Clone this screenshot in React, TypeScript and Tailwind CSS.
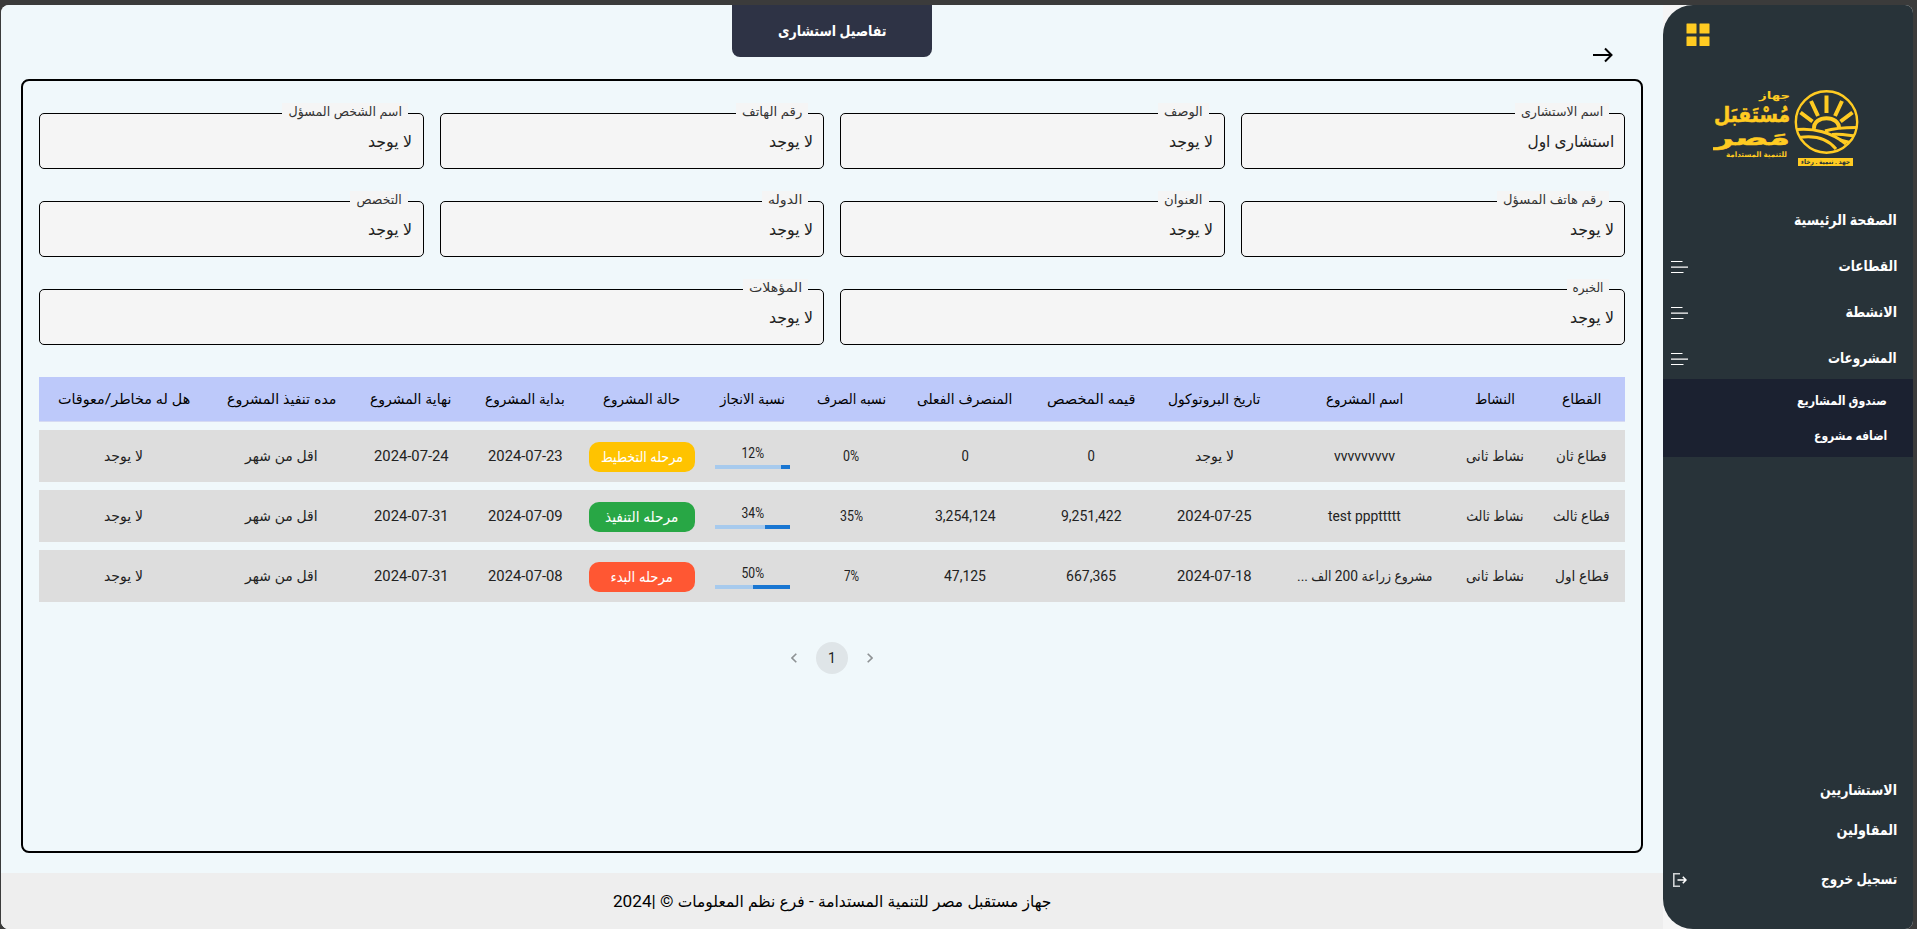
import { useLayoutEffect, useRef, useState, type ReactNode } from "react";

const ARABIC = "font-[Roboto,'DejaVu_Sans_Condensed','DejaVu_Sans',sans-serif]";

/** Text condensed or widened to a fixed measure, like a narrow Arabic face. */
function Fit({ w, children }: { w: number; children: ReactNode }) {
  const ref = useRef<HTMLSpanElement>(null);
  const [scale, setScale] = useState(1);
  useLayoutEffect(() => {
    if (ref.current && ref.current.offsetWidth > 0) setScale(w / ref.current.offsetWidth);
  }, [w]);
  return (
    <span className="inline-flex justify-start whitespace-nowrap" style={{ width: w }}>
      <span ref={ref} className="inline-block shrink-0 origin-right" style={{ transform: `scaleX(${scale})` }}>
        {children}
      </span>
    </span>
  );
}

function Field({ label, lw, value = "لا يوجد", vw = 44, wide }: { label: string; lw: number; value?: string; vw?: number; wide?: boolean }) {
  return (
    <div className={`relative flex h-14 items-center rounded-[5px] border border-black bg-[#f5f5f5] px-[10px] pt-[2px] text-base text-[#222] ${wide ? "col-span-2" : ""}`}>
      <span className="absolute -top-[11px] right-[15px] flex h-5 items-center bg-[#f5f5f5] px-[6px] pb-[2px] text-[12.5px] text-[#333]">
        <Fit w={lw}>{label}</Fit>
      </span>
      <Fit w={vw}>{value}</Fit>
    </div>
  );
}

const COLS = "grid grid-cols-[87px_86px_175px_125px_122px_130px_97px_101px_120px_114.5px_113.5px_145px_170px] items-center justify-items-center";

const HEAD: [string, number][] = [
  ["القطاع", 39], ["النشاط", 40], ["اسم المشروع", 77], ["تاريخ البروتوكول", 92], ["قيمه المخصص", 88],
  ["المنصرف الفعلى", 95], ["نسبه الصرف", 69], ["نسبة الانجاز", 65], ["حالة المشروع", 77], ["بداية المشروع", 80],
  ["نهاية المشروع", 81], ["مده تنفيذ المشروع", 109], ["هل له مخاطر/معوقات", 132],
];

type Row = { before: [string, number][]; pct: number; badge: [string, number, string]; after: [string, number][] };

const ROWS: Row[] = [
  {
    before: [["قطاع ثان", 51], ["نشاط ثانى", 58], ["vvvvvvvvv", 61], ["لا يوجد", 39], ["0", 7.5], ["0", 7.5], ["0%", 16]],
    pct: 12,
    badge: ["مرحله التخطيط", 82, "bg-[#ffc300]"],
    after: [["2024-07-23", 75], ["2024-07-24", 75], ["اقل من شهر", 73], ["لا يوجد", 39]],
  },
  {
    before: [["قطاع ثالث", 57], ["نشاط ثالث", 57], ["test pppttttt", 73], ["2024-07-25", 75], ["9,251,422", 61], ["3,254,124", 61], ["35%", 23]],
    pct: 34,
    badge: ["مرحله التنفيذ", 73, "bg-[#28a745]"],
    after: [["2024-07-09", 75], ["2024-07-31", 75], ["اقل من شهر", 73], ["لا يوجد", 39]],
  },
  {
    before: [["قطاع اول", 54], ["نشاط ثانى", 58], ["مشروع زراعة 200 الف ...", 135], ["2024-07-18", 75], ["667,365", 50], ["47,125", 42], ["7%", 15]],
    pct: 50,
    badge: ["مرحله البدء", 62.5, "bg-[#ff5733]"],
    after: [["2024-07-08", 75], ["2024-07-31", 75], ["اقل من شهر", 73], ["لا يوجد", 39]],
  },
];

function Logo() {
  return (
    <svg viewBox="0 0 146 77" className="h-[77px] w-[146px]" fill="none" stroke="#ffcb22">
      <defs>
        <clipPath id="disc"><circle cx="113.500" cy="32" r="31" /></clipPath>
      </defs>
      <circle cx="113.500" cy="32" r="30.700" strokeWidth="2.400" />
      <g clipPath="url(#disc)">
        <path d="M113.500 23V5.500M105 26 98 11M122 26 129 11M99.500 31.500 87.500 22.500M127.500 31.500 139.500 22.500" strokeWidth="4" />
        <path d="M101 39C100 24.500 127 24.500 126 39" strokeWidth="4" />
        <path d="M84 39.500C100 38 119 42 133 54M112 41C120 38.500 130 37.500 143 37.500" strokeWidth="3" />
        <path d="M86 47.500C102 45 115 49 123 59M119 44.500C126 43.500 134 45 142 46M127 50 137 52.500" strokeWidth="3" />
      </g>
      <rect x="85" y="68" width="55" height="8" fill="#ffcb22" stroke="none" />
      <g fill="#ffcb22" stroke="none" direction="rtl" className={`${ARABIC} font-bold`}>
        <text x="77" y="9" fontSize="10" textLength="31" lengthAdjust="spacingAndGlyphs">جهاز</text>
        <text x="77" y="31.500" fontSize="21" stroke="#ffcb22" strokeWidth="0.500" textLength="76" lengthAdjust="spacingAndGlyphs">مُسْتَقبَل</text>
        <text x="77" y="55" fontSize="21" stroke="#ffcb22" strokeWidth="0.500" textLength="76" lengthAdjust="spacingAndGlyphs">مَصر</text>
        <text x="74" y="67" fontSize="7.500" textLength="61" lengthAdjust="spacingAndGlyphs">للتنمية المستدامة</text>
        <text x="137" y="74" fontSize="6.500" fill="#283339" textLength="49" lengthAdjust="spacingAndGlyphs">جهد . تنمية . رخاء</text>
      </g>
    </svg>
  );
}

function MenuLines() {
  return (
    <svg viewBox="0 0 17 14" className="h-[14px] w-[17px]" stroke="#fff" strokeWidth="1.200">
      <path d="M0 1.500H11.500M0 7.200H17M0 12.500H12.500" />
    </svg>
  );
}

function NavItem({ text, w, lines }: { text: string; w: number; lines?: boolean }) {
  return (
    <div className="flex h-[46px] items-center justify-between pr-4 pl-2">
      <Fit w={w}>{text}</Fit>
      {lines && <MenuLines />}
    </div>
  );
}

export default function App() {
  return (
    <div dir="rtl" className={`h-[929px] w-[1917px] overflow-hidden bg-[#3b3b3b] pt-[5px] pr-1 pl-px ${ARABIC}`}>
      <div className="flex h-[924px] w-[1912px] overflow-hidden rounded-lg bg-[#f5f5f5]">
        <aside className="flex w-[250px] shrink-0 flex-col rounded-l-[30px] bg-[#283339] text-[14.5px] font-bold text-white">
          <div className="flex h-[85px] justify-end pt-[18px] pl-[23px]">
            <svg viewBox="0 0 24 24" className="size-6" fill="#ffcb22">
              <rect x="0.500" y="0.500" width="10" height="10" rx="0.500" />
              <rect x="13.500" y="0.500" width="10" height="10" rx="0.500" />
              <rect x="0.500" y="13.500" width="10" height="9.500" rx="0.500" />
              <rect x="13.500" y="13.500" width="10" height="9.500" rx="0.500" />
            </svg>
          </div>
          <div className="flex h-[108px] justify-end pl-[50px]"><Logo /></div>
          <NavItem text="الصفحة الرئيسية" w={103} />
          <NavItem text="القطاعات" w={58.5} lines />
          <NavItem text="الانشطة" w={51.5} lines />
          <NavItem text="المشروعات" w={69} lines />
          <div className="-mt-[3px] flex h-[78px] flex-col bg-[#1b2130] pt-[5px] pr-[26px] text-[12.5px]">
            <div className="flex h-[35px] items-center"><Fit w={90}>صندوق المشاريع</Fit></div>
            <div className="flex h-[35px] items-center"><Fit w={73}>اضافه مشروع</Fit></div>
          </div>
          <div className="mt-auto flex h-10 items-center pr-4"><Fit w={77}>الاستشاريين</Fit></div>
          <div className="flex h-10 items-center pr-4"><Fit w={60.5}>المقاولين</Fit></div>
          <div className="mb-[29px] mt-[9px] flex h-10 items-center justify-between pr-4 pl-[10px]">
            <Fit w={76}>تسجيل خروج</Fit>
            <svg viewBox="0 0 14 14" className="size-[14px]" fill="none" stroke="#fff" strokeWidth="1.600">
              <path d="M7 .8H.8V13.200H7" stroke="#cfd2d4" />
              <path d="M4.500 7H13M9.800 3.700 13 7 9.800 10.300" />
            </svg>
          </div>
        </aside>

        <div className="flex grow flex-col bg-[#f0f8fb]">
          <header className="grid h-[74px] grid-cols-3 justify-items-center">
            <div className="w-full pt-[42px] pr-[50px]">
              <svg viewBox="0 0 20 16" className="h-4 w-5" fill="none" stroke="#000" strokeWidth="2">
                <path d="M0 8H18.500M12 1.500 18.500 8 12 14.500" />
              </svg>
            </div>
            <div className="flex h-[52px] w-[200px] items-center justify-center rounded-b-lg bg-[#2e3345] text-[15px] font-bold text-white">
              <Fit w={109}>تفاصيل استشارى</Fit>
            </div>
          </header>

          <main className="mx-5 flex h-[774px] flex-col rounded-lg border-2 border-black px-4 pt-8">
            <div className="grid grid-cols-4 gap-x-4 gap-y-8">
              <Field label="اسم الاستشارى" lw={82} value="استشارى اول" vw={86.5} />
              <Field label="الوصف" lw={39} />
              <Field label="رقم الهاتف" lw={60} />
              <Field label="اسم الشخص المسؤل" lw={113.5} />
              <Field label="رقم هاتف المسؤل" lw={100} />
              <Field label="العنوان" lw={39} />
              <Field label="الدوله" lw={34} />
              <Field label="التخصص" lw={45.5} />
              <Field label="الخبره" lw={30.5} wide />
              <Field label="المؤهلات" lw={53} wide />
            </div>

            <div className="mt-8 flex flex-col gap-2 text-sm text-[#222]">
              <div className={`${COLS} h-[45px] border-b border-[#d6daf2] bg-[#bdc9fa] text-black`}>
                {HEAD.map(([t, w]) => <Fit key={t} w={w}>{t}</Fit>)}
              </div>
              {ROWS.map((r) => (
                <div key={r.pct} className={`${COLS} h-[52px] bg-[#ddd]`}>
                  {r.before.map(([t, w], i) => <Fit key={i} w={w}>{t}</Fit>)}
                  <div className="flex w-[75px] flex-col items-center">
                    <span className="h-5 leading-5"><Fit w={22.5}>{r.pct}%</Fit></span>
                    <div className="mt-[2px] h-1 w-full bg-[#a7caed]">
                      <div className="h-full bg-[#1976d2]" style={{ width: `${r.pct}%` }} />
                    </div>
                  </div>
                  <div className={`mt-[2px] flex h-[30px] w-[106px] items-center justify-center rounded-[10px] pt-[2px] text-[15px] text-white ${r.badge[2]}`}>
                    <Fit w={r.badge[1]}>{r.badge[0]}</Fit>
                  </div>
                  {r.after.map(([t, w], i) => <Fit key={i} w={w}>{t}</Fit>)}
                </div>
              ))}
            </div>

            <div dir="ltr" className="mt-10 flex items-center justify-center gap-[6px] text-sm text-[#222]">
              <span className="flex size-8 items-center justify-center">
                <svg viewBox="0 0 6 10" className="h-[10px] w-[6px]" fill="none" stroke="#8e9294" strokeWidth="1.600"><path d="M5.300.7 1 5l4.300 4.300" /></svg>
              </span>
              <span className="flex size-8 items-center justify-center rounded-full bg-[#dfe5e8]">1</span>
              <span className="flex size-8 items-center justify-center">
                <svg viewBox="0 0 6 10" className="h-[10px] w-[6px]" fill="none" stroke="#8e9294" strokeWidth="1.600"><path d="M.7.7 5 5 .7 9.300" /></svg>
              </span>
            </div>
          </main>

          <footer className="mt-5 flex grow items-center justify-center bg-[#eee] pt-[2px] text-base text-black">
            <Fit w={438}>جهاز مستقبل مصر للتنمية المستدامة - فرع نظم المعلومات © |2024</Fit>
          </footer>
        </div>
      </div>
    </div>
  );
}
